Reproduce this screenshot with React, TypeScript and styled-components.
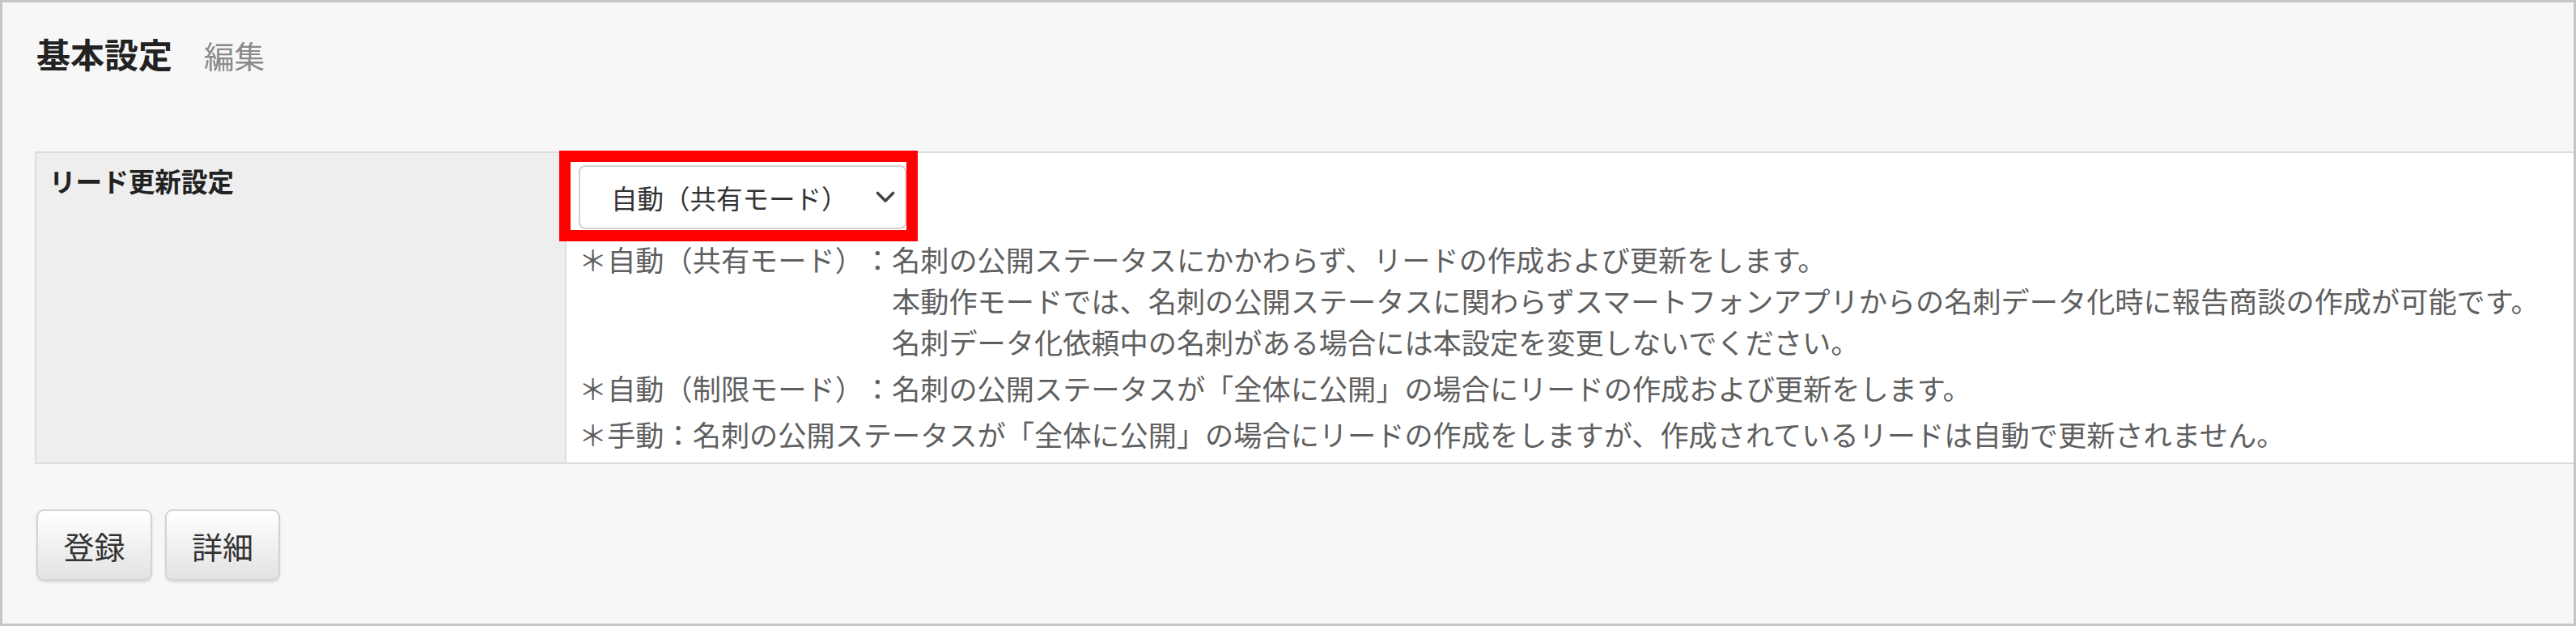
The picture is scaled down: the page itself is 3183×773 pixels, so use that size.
import React from 'react';
import styled, { createGlobalStyle } from 'styled-components';

const Global = createGlobalStyle`
  html, body { margin: 0; padding: 0; background: #ffffff; }
  body {
    font-family: "Noto Sans CJK JP", "Noto Sans", sans-serif;
    text-spacing-trim: space-all;
  }
`;

const Panel = styled.div`
  box-sizing: border-box;
  width: 3183px;
  height: 773px;
  border: 3px solid #c6c6c6;
  background: #f7f7f7;
  padding: 38px 0 0 40px;
  display: flex;
  flex-direction: column;
`;

const Title = styled.h1`
  margin: 0 0 94px 2px;
  display: flex;
  align-items: baseline;
  font-size: 42px;
  line-height: 50px;
  font-weight: 700;
  color: #222;
`;

const SubTitle = styled.span`
  margin-left: 39px;
  font-size: 37.5px;
  font-weight: 400;
  color: #8a8a8a;
`;

const FormTable = styled.div`
  display: grid;
  grid-template-columns: 655px 1fr;
  border: 2px solid #dcdcdc;
  border-right: none;
`;

const LabelCell = styled.div`
  background: #eeeeee;
  border-right: 2px solid #dcdcdc;
  padding: 14px 16px;
  font-size: 32.6px;
  line-height: 40px;
  font-weight: 700;
  color: #222;
`;

const ValueCell = styled.div`
  background: #ffffff;
  padding: 15px 0 10px 15px;
`;

const SelectWrap = styled.div`
  position: relative;
  width: 405px;
`;

const SelectBox = styled.div`
  box-sizing: border-box;
  width: 405px;
  height: 79px;
  border: 2px solid #d2d2d2;
  border-radius: 8px;
  background: #fff;
  display: flex;
  align-items: center;
  justify-content: space-between;
  padding: 0 12px 0 38px;
  font-size: 32.5px;
  color: #333;
`;

const Highlight = styled.div`
  position: absolute;
  box-sizing: border-box;
  left: -24px;
  top: -18px;
  width: 443px;
  height: 112px;
  border: 14px solid #ff0000;
  pointer-events: none;
`;

const Notes = styled.div`
  margin-top: 11px;
  font-size: 35.2px;
  line-height: 51px;
  color: #5f5f5f;
  white-space: nowrap;
`;

const Note = styled.div`
  display: flex;
  & + & { margin-top: 6px; }
`;

const NoteBody = styled.div`
  display: flex;
  flex-direction: column;
`;

const Actions = styled.div`
  margin: 56px 0 0 2px;
  display: flex;
  gap: 16px;
`;

const Button = styled.button<{ $w: number }>`
  box-sizing: border-box;
  width: ${(p) => p.$w}px;
  height: 88px;
  border: 2px solid #d4d4d4;
  border-radius: 9px;
  background: linear-gradient(#ffffff, #e3e3e3);
  box-shadow: 0 2px 3px rgba(0, 0, 0, 0.12);
  font-family: "Noto Sans CJK JP", "Noto Sans", sans-serif;
  font-size: 38px;
  color: #333;
  padding: 0;
`;

const Chevron = () => (
  <svg width="24" height="15" viewBox="0 0 24 15">
    <polyline points="2.5,2.5 12,12 21.5,2.5" fill="none" stroke="#444" strokeWidth="3.6" strokeLinecap="round" strokeLinejoin="round" />
  </svg>
);

export default function App() {
  return (
    <>
      <Global />
      <Panel>
        <Title>
          基本設定<SubTitle>編集</SubTitle>
        </Title>
        <FormTable>
          <LabelCell>リード更新設定</LabelCell>
          <ValueCell>
            <SelectWrap>
              <SelectBox>
                <span>自動（共有モード）</span>
                <Chevron />
              </SelectBox>
              <Highlight />
            </SelectWrap>
            <Notes>
              <Note>
                <span>＊自動（共有モード）：</span>
                <NoteBody>
                  <div>名刺の公開ステータスにかかわらず、リードの作成および更新をします。</div>
                  <div>本動作モードでは、名刺の公開ステータスに関わらずスマートフォンアプリからの名刺データ化時に報告商談の作成が可能です。</div>
                  <div>名刺データ化依頼中の名刺がある場合には本設定を変更しないでください。</div>
                </NoteBody>
              </Note>
              <Note>＊自動（制限モード）：名刺の公開ステータスが「全体に公開」の場合にリードの作成および更新をします。</Note>
              <Note>＊手動：名刺の公開ステータスが「全体に公開」の場合にリードの作成をしますが、作成されているリードは自動で更新されません。</Note>
            </Notes>
          </ValueCell>
        </FormTable>
        <Actions>
          <Button $w={143}>登録</Button>
          <Button $w={142}>詳細</Button>
        </Actions>
      </Panel>
    </>
  );
}
